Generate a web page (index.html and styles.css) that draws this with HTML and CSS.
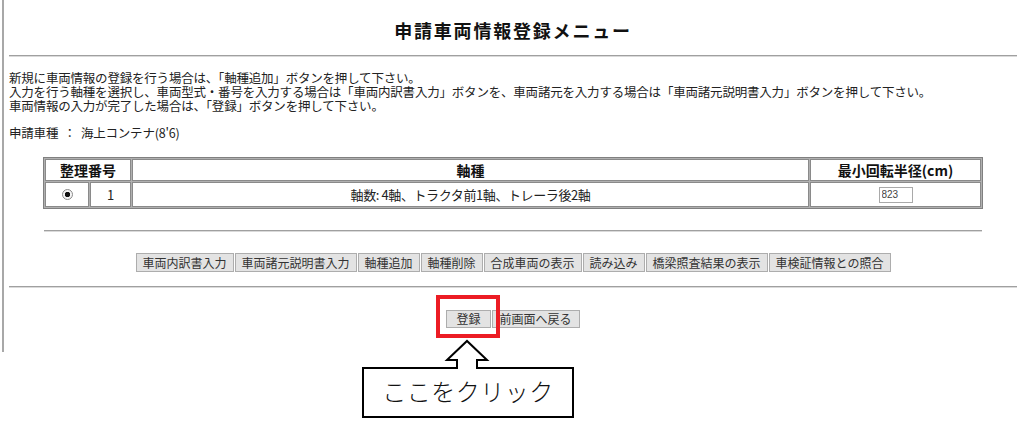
FILE: index.html
```html
<!DOCTYPE html>
<html lang="ja">
<head>
<meta charset="utf-8">
<title>申請車両情報登録メニュー</title>
<link rel="stylesheet" href="styles.css">
</head>
<body>
<div class="frame">
  <h1 class="title">申請車両情報登録メニュー</h1>
  <hr class="rule">
  <p class="intro">新規に車両情報の登録を行う場合は、「軸種追加」ボタンを押して下さい。<br>入力を行う軸種を選択し、車両型式・番号を入力する場合は「車両内訳書入力」ボタンを、車両諸元を入力する場合は「車両諸元説明書入力」ボタンを押して下さい。<br>車両情報の入力が完了した場合は、「登録」ボタンを押して下さい。</p>
  <p class="kind">申請車種&nbsp;&nbsp;：&nbsp;&nbsp;海上コンテナ(8'6)</p>
  <table class="axles">
    <colgroup>
      <col class="c-radio"><col class="c-no"><col class="c-type"><col class="c-rad">
    </colgroup>
    <tr>
      <th colspan="2">整理番号</th>
      <th>軸種</th>
      <th>最小回転半径(cm)</th>
    </tr>
    <tr>
      <td><input class="radio" type="radio" name="sel" checked></td>
      <td>1</td>
      <td>軸数: 4軸、トラクタ前1軸、トレーラ後2軸</td>
      <td><input class="radius" type="text" value="823"></td>
    </tr>
  </table>
  <hr class="rule short">
  <div class="actions">
    <button class="btn">車両内訳書入力</button>
    <button class="btn">車両諸元説明書入力</button>
    <button class="btn">軸種追加</button>
    <button class="btn">軸種削除</button>
    <button class="btn">合成車両の表示</button>
    <button class="btn">読み込み</button>
    <button class="btn">橋梁照査結果の表示</button>
    <button class="btn">車検証情報との照合</button>
  </div>
  <hr class="rule low">
  <div class="submit">
    <button class="btn reg">登録</button>
    <button class="btn">前画面へ戻る</button>
  </div>
</div>

<div class="highlight"></div>
<div class="callout">
  <svg class="callout-shape" width="214" height="80" viewBox="361 339 214 80">
    <path d="M363,368 L457,368 L457,360 L447,360 L467,341 L487,360 L477,360 L477,368 L573,368 L573,417 L363,417 Z" fill="#fff" stroke="#000" stroke-width="2" stroke-linejoin="miter"/>
  </svg>
  <div class="callout-text">ここをクリック</div>
</div>
</body>
</html>
```

FILE: styles.css
```css
* { box-sizing: border-box; }

html, body {
  margin: 0;
  padding: 0;
  background: #fff;
}

body {
  width: 1024px;
  height: 428px;
  position: relative;
  overflow: hidden;
  font-family: "Noto Sans CJK JP", "Noto Sans", sans-serif;
  color: #222;
}

.frame {
  margin-left: 2px;
  border-left: 2px solid #a8a8a8;
  padding: 0 7px 0 5px;
  height: 352px;
}

.title {
  margin: 0;
  padding-top: 18px;
  height: 42px;
  line-height: 24px;
  font-size: 18px;
  font-weight: bold;
  letter-spacing: 1.8px;
  text-align: center;
  color: #111;
}

.rule {
  height: 0;
  margin: 13px 0 0;
  border: 0;
  border-top: 1px solid #a0a0a0;
  border-bottom: 1px solid #dadada;
}

.rule.short {
  width: 938px;
  margin: 21px auto 0;
}

.rule.low {
  margin-top: 14px;
}

.intro {
  margin: 14px 0 0;
  font-size: 12.5px;
  line-height: 14px;
  letter-spacing: -0.2px;
  white-space: nowrap;
}

.kind {
  margin: 13px 0 0;
  font-size: 12.5px;
  line-height: 14px;
  letter-spacing: -0.2px;
}

.axles {
  margin: 17px auto 0;
  width: 938px;
  table-layout: fixed;
  border-collapse: separate;
  border-spacing: 1px;
  border: 1px solid #808080;
  background: #b0b0b0;
}

.c-radio { width: 44px; }
.c-no { width: 41px; }
.c-type { width: 677px; }
.c-rad { width: 171px; }

.axles th,
.axles td {
  background: #fff;
  border: 1px solid #8a8a8a;
  padding: 0;
  text-align: center;
  vertical-align: middle;
}

.axles th {
  height: 22px;
  font-size: 14px;
  font-weight: bold;
  line-height: 18px;
  color: #111;
}

.axles td {
  height: 25px;
  font-size: 13px;
  line-height: 16px;
  letter-spacing: -0.4px;
}

.radio {
  appearance: none;
  -webkit-appearance: none;
  display: block;
  margin: 0 auto;
  width: 11px;
  height: 11px;
  border: 1px solid #8a8a8a;
  border-radius: 50%;
  background: radial-gradient(circle, #111 0 2.4px, #f4f4f4 3px);
}

.radius {
  display: block;
  margin: 0 auto;
  width: 34px;
  height: 16px;
  padding: 0 2px;
  border: 1px solid #a9a9a9;
  font-family: "Liberation Sans", sans-serif;
  font-size: 10px;
  color: #444;
  letter-spacing: 0;
}

.actions {
  margin-top: 21px;
  display: flex;
  justify-content: center;
  gap: 1px;
}

.btn {
  height: 19px;
  padding: 0 6px;
  margin: 0;
  border: 1px solid #adadad;
  background: #e3e3e3;
  font-family: "Noto Sans CJK JP", sans-serif;
  font-size: 12px;
  line-height: 16px;
  color: #333;
  border-radius: 0;
}

.submit {
  margin-top: 22px;
  display: flex;
  justify-content: center;
  gap: 1px;
}

.submit .btn {
  height: 18px;
  padding: 0 7px;
}

.submit .reg {
  padding: 0 9px;
}

.highlight {
  position: absolute;
  left: 436px;
  top: 295px;
  width: 64px;
  height: 43px;
  border: 4px solid #ec1c24;
}

.callout {
  position: absolute;
  left: 361px;
  top: 339px;
  width: 214px;
  height: 80px;
}

.callout-shape {
  display: block;
}

.callout-text {
  position: absolute;
  left: 0;
  right: 0;
  top: 36px;
  text-align: center;
  font-size: 24px;
  line-height: 32px;
  font-weight: 300;
  letter-spacing: 0.5px;
  color: #111;
}
```
